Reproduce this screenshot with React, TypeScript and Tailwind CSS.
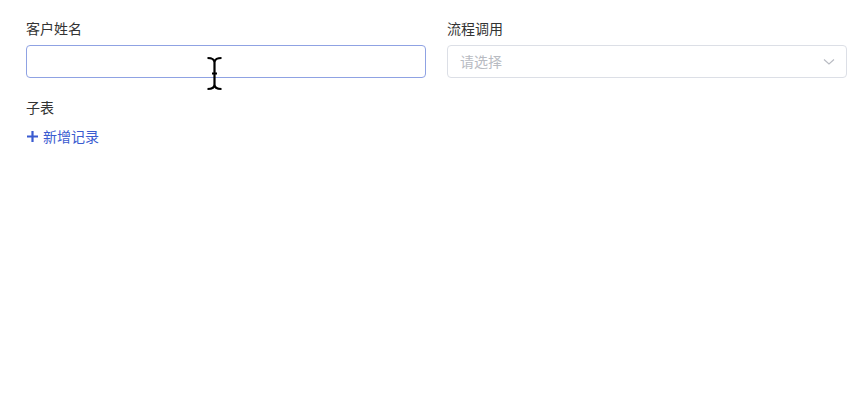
import React from 'react';

const font = { fontFamily: '"Noto Sans CJK SC", "Noto Sans", sans-serif' };

export default function App() {
    return (
        <div className="w-[866px] h-[406px] bg-white relative" style={font}>
            <div className="pl-[26px] pt-[17px]">
                <div className="flex gap-[21px]">
                    <div className="w-[400px]">
                        <div className="text-[14px] leading-[22px] text-[#333] mb-[6px]">客户姓名</div>
                        <input
                            className="w-[400px] h-[33px] rounded-[4px] border border-[#8fa2e3] outline-none px-[12px] text-[14px]"
                        />
                    </div>
                    <div className="w-[400px]">
                        <div className="text-[14px] leading-[22px] text-[#333] mb-[6px]">流程调用</div>
                        <div className="w-[400px] h-[33px] rounded-[4px] border border-[#dcdfe6] flex items-center justify-between pl-[12px] pr-[11px]">
                            <span className="text-[14px] text-[#b8bbc2]">请选择</span>
                            <svg width="12" height="8" viewBox="0 0 12 8" fill="none">
                                <path d="M1 1.5 L6 6 L11 1.5" stroke="#b8bbc2" strokeWidth="1.1" />
                            </svg>
                        </div>
                    </div>
                </div>
                <div className="mt-[18px] text-[14px] leading-[22px] text-[#333]">子表</div>
                <div className="mt-[7px] flex items-center gap-[4px] text-[14px] leading-[22px] text-[#3a5bd0]">
                    <svg width="13" height="13" viewBox="0 0 13 13">
                        <path d="M6.5 1 V12 M1 6.5 H12" stroke="#3a5bd0" strokeWidth="2.2" />
                    </svg>
                    <span>新增记录</span>
                </div>
            </div>
            {/* text cursor */}
            <svg className="absolute left-[206px] top-[56px]" width="17" height="35" viewBox="0 0 17 35" fill="none">
                <path d="M1.5 2 C5 2 8.5 3 8.5 6.5 V28.5 C8.5 32 12 33 15.5 33 M15.5 2 C12 2 8.5 3 8.5 6.5 M8.5 28.5 C8.5 32 5 33 1.5 33 M6 17.5 H11" stroke="#000" strokeWidth="2.2" />
            </svg>
        </div>
    );
}
